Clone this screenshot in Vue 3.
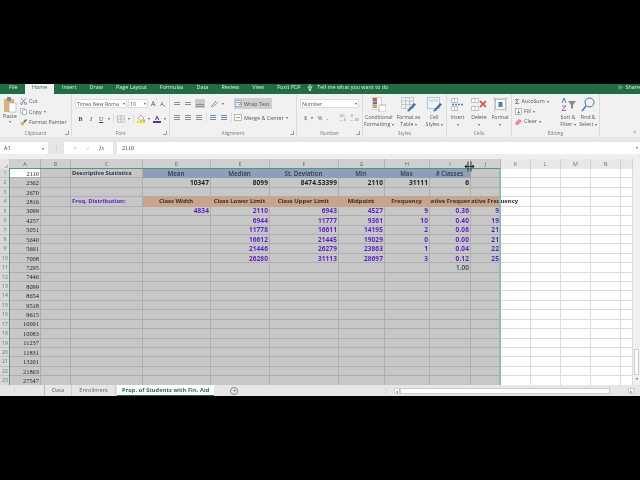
<script setup>
const tabs = ['File', 'Home', 'Insert', 'Draw', 'Page Layout', 'Formulas', 'Data', 'Review', 'View', 'Foxit PDF']
const letters = ['A', 'B', 'C', 'D', 'E', 'F', 'G', 'H', 'I', 'J', 'K', 'L', 'M', 'N', 'O']

const colA = [2110, 2362, 2670, 2816, 3099, 4257, 5051, 5640, 5661, 7008, 7295, 7446, 8099, 8654, 9518, 9615, 10001, 10083, 11237, 11831, 13201, 21863, 27547]

// row number -> cells from column C on
const data = {
  1: { C: 'Descriptive Statistics', D: 'Mean', E: 'Median', F: 'St. Deviation', G: 'Min', H: 'Max', I: '# Classes' },
  2: { D: '10347', E: '8099', F: '8474.53399', G: '2110', H: '31111', I: '6' },
  4: { C: 'Freq. Distribution:', D: 'Class Width', E: 'Class Lower Limit', F: 'Class Upper Limit', G: 'Midpoint', H: 'Frequency', I: 'Relative Frequency', J: 'Cumulative Frequency' },
  5: { D: '4834', E: '2110', F: '6943', G: '4527', H: '9', I: '0.36', J: '9' },
  6: { E: '6944', F: '11777', G: '9361', H: '10', I: '0.40', J: '19' },
  7: { E: '11778', F: '16611', G: '14195', H: '2', I: '0.08', J: '21' },
  8: { E: '16612', F: '21445', G: '19029', H: '0', I: '0.00', J: '21' },
  9: { E: '21446', F: '26279', G: '23863', H: '1', I: '0.04', J: '22' },
  10: { E: '26280', F: '31113', G: '28697', H: '3', I: '0.12', J: '25' },
  11: { I: '1.00' }
}

const selected = 'ABCDEFGHIJ'

const cellClass = (row, col) => {
  const list = []
  if (selected.includes(col)) list.push('sel')
  if (row === 1 && col === 'A') list.push('active')
  if (col === 'A') list.push('serif')
  if (row === 1 && 'DEFGHI'.includes(col)) list.push('blue')
  if (row === 4 && 'DEFGHIJ'.includes(col)) list.push('orange')
  if (col === 'C' && row === 1) list.push('title')
  if (col === 'C' && row === 4) list.push('freq')
  if (row === 2 && col !== 'A') list.push('plain')
  if (row >= 5 && row <= 10 && col !== 'A') list.push('purple')
  if (row === 11 && col === 'I') list.push('total')
  if (col === 'I') list.push('cellI')
  if (col === 'J') list.push('cellJ')
  return list
}

const cellText = (row, col) => {
  if (col === 'A') return colA[row - 1]
  return data[row] && data[row][col] ? data[row][col] : ''
}

const rows = colA.map((_, i) => i + 1)
</script>

<template>
  <div class="screen">
    <div class="excel">
      <div class="tabbar">
        <span v-for="t in tabs" :key="t" class="tab" :class="{ on: t === 'Home' }">{{ t }}</span>
        <span class="tell">
          <svg width="6" height="8" viewBox="0 0 6 8"><path d="M3 0v4M1 2l2 5 2-5" fill="none" stroke="#fff" stroke-width=".8"/></svg>
          Tell me what you want to do
        </span>
        <span class="share">
          <svg width="7" height="7" viewBox="0 0 7 7"><circle cx="2.5" cy="2" r="1.3" fill="none" stroke="#fff" stroke-width=".6"/><path d="M.5 6.5c0-3 4-3 4 0M5 3h2M6 2v2" fill="none" stroke="#fff" stroke-width=".6"/></svg>
          Share
        </span>
      </div>

      <div class="ribbon">
        <!-- Clipboard -->
        <div class="group g-clip">
          <div class="body row">
            <div class="paste">
              <svg width="14" height="16" viewBox="0 0 14 16"><rect x="1" y="2" width="10" height="13" fill="#d8b47a"/><rect x="4" y="0" width="4" height="4" fill="#8a8a8a"/><rect x="6" y="6" width="7" height="9" fill="#fff" stroke="#999" stroke-width=".5"/></svg>
              <span>Paste</span>
              <span class="caret">▾</span>
            </div>
            <div class="clip-list">
              <div class="mini">
                <svg width="7" height="7" viewBox="0 0 7 7"><path d="M1 0l4 5M6 0L2 5" stroke="#667" stroke-width=".7" fill="none"/><circle cx="1.5" cy="5.6" r="1" fill="none" stroke="#46a" stroke-width=".6"/><circle cx="5.5" cy="5.6" r="1" fill="none" stroke="#46a" stroke-width=".6"/></svg>
                Cut
              </div>
              <div class="mini">
                <svg width="7" height="7" viewBox="0 0 7 7"><rect x=".5" y=".5" width="4" height="4.5" fill="#fff" stroke="#889" stroke-width=".5"/><rect x="2.5" y="2" width="4" height="4.5" fill="#fff" stroke="#678" stroke-width=".5"/></svg>
                Copy <span class="caret">▾</span>
              </div>
              <div class="mini">
                <svg width="7" height="7" viewBox="0 0 7 7"><path d="M3 3l3-3 1 1-3 3z" fill="#5a5a5a"/><path d="M0 4l3-1 1 1-1 3z" fill="#e0a040"/></svg>
                Format Painter
              </div>
            </div>
          </div>
          <div class="label">Clipboard<i class="launch"></i></div>
        </div>

        <!-- Font -->
        <div class="group g-font">
          <div class="body col">
            <div class="line">
              <span class="combo w52">Times New Roma<span class="caret">▾</span></span>
              <span class="combo w20">10<span class="caret">▾</span></span>
              <span class="grow">A<sup>^</sup></span>
              <span class="grow small">A<sup>v</sup></span>
            </div>
            <div class="line icons">
              <b class="btn">B</b>
              <i class="btn">I</i>
              <u class="btn">U</u>
              <span class="caret">▾</span>
              <span class="sep"></span>
              <svg width="9" height="8" viewBox="0 0 9 8"><path d="M.5.5h8v7h-8zM4.5.5v7M.5 4h8" fill="none" stroke="#9a9a9a" stroke-width=".6"/></svg>
              <span class="caret">▾</span>
              <span class="sep"></span>
              <span class="paint">
                <svg width="8" height="6" viewBox="0 0 8 6"><path d="M4 0l3 3-3 3-3-3z" fill="#eee" stroke="#777" stroke-width=".5"/><path d="M7 4l1 2H6z" fill="#777"/></svg>
                <i class="swatch yellow"></i>
              </span>
              <span class="caret">▾</span>
              <span class="paint">
                <b class="letter">A</b>
                <i class="swatch violet"></i>
              </span>
              <span class="caret">▾</span>
            </div>
          </div>
          <div class="label">Font<i class="launch"></i></div>
        </div>

        <!-- Alignment -->
        <div class="group g-align">
          <div class="body col">
            <div class="line align-line">
              <span class="lines"><i></i><i></i></span>
              <span class="lines"><i></i><i></i></span>
              <span class="lines pressed"><i></i><i></i></span>
              <svg class="orient" width="10" height="8" viewBox="0 0 10 8"><path d="M1 7l5-6" stroke="#666" stroke-width=".8"/><path d="M3 7l5-5" stroke="#a36ac0" stroke-width=".8"/></svg>
              <span class="caret">▾</span>
              <span class="wrap">
                <svg width="7" height="7" viewBox="0 0 7 7"><path d="M.5.5h6v6h-6z" fill="#e8eef5" stroke="#7a8a9a" stroke-width=".5"/><path d="M1.5 2.5h4v2h-2" fill="none" stroke="#3a70b0" stroke-width=".6"/></svg>
                Wrap Text
              </span>
            </div>
            <div class="line align-line">
              <span class="lines"><i></i><i></i><i></i></span>
              <span class="lines"><i></i><i></i><i></i></span>
              <span class="lines"><i></i><i></i><i></i></span>
              <span class="sep"></span>
              <span class="lines blue-l"><i></i><i></i><i></i></span>
              <span class="lines blue-l"><i></i><i></i><i></i></span>
              <span class="sep"></span>
              <span class="merge">
                <svg width="8" height="7" viewBox="0 0 8 7"><rect x=".5" y=".5" width="7" height="6" fill="#fff" stroke="#777" stroke-width=".5"/><path d="M2 3.5h4" stroke="#555" stroke-width=".6"/></svg>
                Merge &amp; Center <span class="caret">▾</span>
              </span>
            </div>
          </div>
          <div class="label">Alignment<i class="launch"></i></div>
        </div>

        <!-- Number -->
        <div class="group g-num">
          <div class="body col">
            <div class="line"><span class="combo w70">Number<span class="caret">▾</span></span></div>
            <div class="line num-line">
              <span>$</span><span class="caret">▾</span><span>%</span><span class="comma">,</span>
              <span class="dec">.00<br>→.0</span><span class="dec">.0<br>←.00</span>
            </div>
          </div>
          <div class="label">Number<i class="launch"></i></div>
        </div>

        <!-- Styles -->
        <div class="group g-styles">
          <div class="body row spread">
            <div class="big w28">
              <svg width="14" height="15" viewBox="0 0 14 15"><rect x=".5" y=".5" width="9" height="12" fill="#fff" stroke="#aaa" stroke-width=".5"/><rect x="1" y="1" width="4" height="3" fill="#d9534f"/><rect x="1" y="4.500" width="4" height="3" fill="#4a7fc0"/><rect x="1" y="8" width="4" height="3" fill="#e6a04a"/><rect x="7" y="8" width="7" height="7" fill="#fff" stroke="#777" stroke-width=".5"/></svg>
              <span>Conditional<br>Formatting <em class="caret">▾</em></span>
            </div>
            <div class="big w24">
              <svg width="15" height="15" viewBox="0 0 15 15"><path d="M.5.5h12v11H.5zM.5 4h12M.5 7.500h12M4.500.5v11M8.500.5v11" fill="#eef1f4" stroke="#9aa" stroke-width=".5"/><path d="M6 14l7-8 2 1.500-7 7z" fill="#3a70b0"/></svg>
              <span>Format as<br>Table <em class="caret">▾</em></span>
            </div>
            <div class="big w20">
              <svg width="15" height="15" viewBox="0 0 15 15"><rect x=".5" y=".5" width="12" height="11" fill="#eef3f8" stroke="#8a9aaa" stroke-width=".5"/><rect x="2" y="2" width="9" height="3" fill="#cfe0f0"/><path d="M6 14l7-8 2 1.500-7 7z" fill="#3a70b0"/></svg>
              <span>Cell<br>Styles <em class="caret">▾</em></span>
            </div>
          </div>
          <div class="label">Styles</div>
        </div>

        <!-- Cells -->
        <div class="group g-cells">
          <div class="body row spread">
            <div class="big w20">
              <svg width="14" height="15" viewBox="0 0 14 15"><path d="M.5 1.500h6v4h-6zM.5 9.500h6v4h-6zM3.500 1.500v4M3.500 9.500v4" fill="#fff" stroke="#8a8a8a" stroke-width=".5"/><path d="M1 7.500h12" stroke="#4a7fc0" stroke-width="1.500" stroke-dasharray="2 1"/></svg>
              <span>Insert<br><em class="caret">▾</em></span>
            </div>
            <div class="big w20">
              <svg width="16" height="15" viewBox="0 0 16 15"><path d="M.5 1.500h7v4h-7zM.5 9.500h7v4h-7zM4 1.500v4M4 9.500v4" fill="#fff" stroke="#8a8a8a" stroke-width=".5"/><path d="M9 4l6 6M15 4l-6 6" stroke="#d9402e" stroke-width="1.500"/></svg>
              <span>Delete<br><em class="caret">▾</em></span>
            </div>
            <div class="big w20">
              <svg width="15" height="15" viewBox="0 0 15 15"><rect x="2.500" y="2.500" width="10" height="10" fill="#fff" stroke="#8a8a8a" stroke-width=".5"/><rect x="5.500" y="5" width="4" height="5" fill="#4a7fc0"/><path d="M0 1.500h15M1.500 0v15M13 0v15" stroke="#999" stroke-width=".4"/></svg>
              <span>Format<br><em class="caret">▾</em></span>
            </div>
          </div>
          <div class="label">Cells</div>
        </div>

        <!-- Editing -->
        <div class="group g-edit">
          <div class="body row">
            <div class="edit-list">
              <div class="mini"><span class="sigma">Σ</span> AutoSum <span class="caret">▾</span></div>
              <div class="mini">
                <svg width="7" height="7" viewBox="0 0 7 7"><rect x=".5" y=".5" width="6" height="6" fill="#fff" stroke="#777" stroke-width=".5"/><path d="M3.500 1.500v4M2 4l1.500 1.500L5 4" fill="none" stroke="#3a70b0" stroke-width=".7"/></svg>
                Fill <span class="caret">▾</span>
              </div>
              <div class="mini">
                <svg width="7" height="7" viewBox="0 0 7 7"><path d="M0 5l4-4 3 2-4 4H1z" fill="#e88aa0"/></svg>
                Clear <span class="caret">▾</span>
              </div>
            </div>
            <div class="big w20 sort">
              <svg width="15" height="15" viewBox="0 0 15 15"><path d="M7 4h8l-3 4v4l-2-1V8z" fill="#8a8a8a"/><path d="M1 6l2-5 2 5" fill="none" stroke="#3a70b0" stroke-width=".9"/><path d="M1 9h4l-4 4.500h4" fill="none" stroke="#b050a0" stroke-width=".9"/></svg>
              <span>Sort &amp;<br>Filter <em class="caret">▾</em></span>
            </div>
            <div class="big w20">
              <svg width="14" height="15" viewBox="0 0 14 15"><circle cx="8.500" cy="5.500" r="4.500" fill="none" stroke="#3a70b0" stroke-width="1"/><path d="M5 9l-4 5" stroke="#3a70b0" stroke-width="1.300"/></svg>
              <span>Find &amp;<br>Select <em class="caret">▾</em></span>
            </div>
          </div>
          <div class="label">Editing</div>
        </div>

        <div class="collapse">^</div>
      </div>

      <div class="strip"></div>

      <div class="formula">
        <div class="namebox">A1<span class="caret">▾</span></div>
        <div class="dots">⋮</div>
        <div class="fbtns">
          <span>✕</span><span>✓</span><span class="fx">fx</span>
        </div>
        <div class="finput">2110<span class="caret">▾</span></div>
      </div>

      <div class="strip2"></div>

      <div class="sheet">
        <div class="gridwrap">
          <div class="grid">
            <div class="corner"><i></i></div>
            <div v-for="(l, i) in letters" :key="'h' + i" class="colhead" :class="{ selh: i < 10 }">{{ l === 'O' ? '' : l }}</div>
            <template v-for="r in rows" :key="r">
              <div class="rowhead">{{ r }}</div>
              <div
                v-for="(l, i) in letters"
                :key="r + '-' + i"
                class="cell"
                :class="cellClass(r, l)"
              ><span>{{ cellText(r, l) }}</span></div>
            </template>
          </div>
          <div class="selbox"></div>
          <svg class="cursor" width="11" height="11" viewBox="0 0 11 11">
            <path d="M1 5.500h9M4 .5v10M7 .5v10" stroke="#111" stroke-width=".8" fill="none"/>
            <path d="M.5 5.500l2-2v4zM10.500 5.500l-2-2v4z" fill="#111"/>
          </svg>
        </div>
        <div class="vscroll">
          <span class="thumb"></span>
          <span class="arrow">▾</span>
        </div>
      </div>

      <div class="bottom">
        <div class="nav"><span>‹</span><span>›</span></div>
        <div class="stab">Data</div>
        <div class="stab">Enrollment</div>
        <div class="stab current">Prop. of Students with Fin. Aid</div>
        <div class="plus">+</div>
        <div class="hscroll">
          <span class="hdots">⋮</span>
          <span class="harrow">◂</span>
          <span class="hthumb"></span>
          <span class="harrow end">▸</span>
        </div>
      </div>
    </div>
  </div>
</template>

<style>
html, body { margin: 0; background: #000; }
</style>

<style scoped>
.screen {
  width: 640px;
  height: 480px;
  background: #000;
  padding: 84px 0;
  box-sizing: border-box;
  overflow: hidden;
  font-family: "Open Sans", "Liberation Sans", sans-serif;
  color: #444;
}
.excel {
  width: 640px;
  height: 312px;
  background: #e9e9e9;
  display: flex;
  flex-direction: column;
  filter: blur(0.35px);
}

.tabbar {
  height: 10px;
  background: #1f6e43;
  display: flex;
  color: #e4efe8;
  font-size: 5.4px;
  flex: none;
  padding-left: 7px;
  overflow: hidden;
}
.tab { padding: 0 6.6px; line-height: 7px; height: 10px; }
.tab:first-child { padding: 0 7.500px 0 2px; }
.tab.on { background: #f1f1f1; color: #2a6e48; padding: 0 7px; margin-right: 1px; }
.tell { margin-left: 0; display: flex; align-items: flex-start; gap: 4px; line-height: 7px; }
.tell svg { display: block; }
.share { margin-left: auto; display: flex; align-items: flex-start; gap: 3px; line-height: 7px; white-space: nowrap; width: 22px; flex: none; box-sizing: border-box; }

.ribbon {
  height: 43px;
  flex: none;
  background: #f1f1f1;
  display: flex;
  font-size: 5.4px;
  color: #555;
}
.group {
  display: flex;
  flex-direction: column;
  border-right: 1px solid #dcdcdc;
  box-sizing: border-box;
  flex: none;
}
.g-clip { width: 72px; }
.g-font { width: 98px; }
.g-align { width: 127px; }
.g-num { width: 66px; }
.g-styles { width: 84px; }
.g-cells { width: 65px; }
.g-edit { width: 88px; }
.body { flex: 1; min-height: 0; }
.row { display: flex; }
.col { display: flex; flex-direction: column; gap: 3px; padding: 4px 3px 0 3px; }
.spread { justify-content: space-around; padding-top: 3px; }
.label {
  height: 8px;
  line-height: 8px;
  text-align: center;
  font-size: 4.800px;
  color: #777;
  position: relative;
}
.launch {
  position: absolute;
  right: 2px;
  bottom: 2px;
  width: 3px;
  height: 3px;
  border-right: 1px solid #999;
  border-bottom: 1px solid #999;
}
.caret { font-size: 3.5px; color: #666; font-style: normal; }

.paste {
  width: 20px;
  display: flex;
  flex-direction: column;
  align-items: center;
  padding-top: 3px;
  line-height: 6px;
  flex: none;
}
.clip-list { display: flex; flex-direction: column; gap: 2.500px; padding-top: 3px; }
.mini { display: flex; align-items: center; gap: 2px; height: 8px; white-space: nowrap; }
.mini svg { flex: none; }

.line { display: flex; align-items: center; gap: 1px; height: 11px; }
.combo {
  height: 9px;
  background: #fff;
  border: 1px solid #dcdcdc;
  box-sizing: border-box;
  display: flex;
  align-items: center;
  justify-content: space-between;
  padding: 0 1px;
  font-size: 5.200px;
  white-space: nowrap;
  overflow: hidden;
}
.w52 { width: 52px; }
.w20 { width: 20px; }
.w70 { width: 62px; }
.grow { font-size: 7px; margin-left: 2px; color: #555; display: flex; }
.grow.small { font-size: 5.500px; align-items: flex-end; }
.grow sup { font-size: 3px; line-height: 3px; color: #3a70b0; }
.icons { gap: 3px; padding-left: 2px; margin-top: 1px; }
.btn { font-size: 6px; width: 8px; text-align: center; color: #444; font-family: "Liberation Serif", serif; }
.sep { width: 1px; height: 9px; background: #ddd; }
.paint { display: flex; flex-direction: column; align-items: center; width: 9px; gap: 0; }
.swatch { display: block; width: 8px; height: 2px; }
.yellow { background: #f2e600; }
.violet { background: #6a1fd0; }
.letter { font-size: 6px; line-height: 6px; color: #444; }

.align-line { gap: 2px; }
.lines { width: 8px; height: 9px; display: flex; flex-direction: column; justify-content: center; gap: 1px; flex: none; padding: 0 1px; box-sizing: border-box; margin-right: 1px; }
.lines i { display: block; height: 1px; background: #8f8f8f; }
.lines.pressed { background: #c9c9c9; width: 10px; justify-content: flex-end; padding-bottom: 1px; }
.blue-l i { background: #6c8db5; }
.orient { margin-left: 2px; }
.wrap {
  margin-left: 8px;
  width: 38px;
  height: 11px;
  background: #cfcfcf;
  display: flex;
  align-items: center;
  gap: 2px;
  padding: 0 1px;
  box-sizing: border-box;
  white-space: nowrap;
}
.merge { display: flex; align-items: center; gap: 2px; white-space: nowrap; }

.num-line { gap: 4px; padding-left: 4px; color: #666; font-size: 6px; }
.comma { margin-right: 7px; }
.dec { font-size: 3.800px; line-height: 4px; color: #777; }

.big {
  display: flex;
  flex-direction: column;
  align-items: center;
  text-align: center;
  line-height: 7px;
  gap: 2px;
  flex: none;
  font-size: 5.100px;
  white-space: nowrap;
}
.w28 { width: 28px; }
.w24 { width: 24px; }
.edit-list { padding: 3px 0 0 3px; display: flex; flex-direction: column; gap: 2px; width: 43px; flex: none; }
.big.sort { padding-top: 3px; }
.big.sort + .big { padding-top: 3px; }
.sigma { font-size: 8px; line-height: 8px; color: #444; }
.collapse { margin-left: auto; align-self: flex-end; padding: 0 4px 2px; font-size: 5px; }

.strip { height: 5px; flex: none; background: #e6e6e6; }
.formula {
  height: 12px;
  flex: none;
  display: flex;
  background: #e6e6e6;
  font-size: 5.400px;
}
.namebox {
  width: 48px;
  background: #fff;
  display: flex;
  align-items: center;
  justify-content: space-between;
  padding: 0 4px;
  box-sizing: border-box;
}
.dots { width: 16px; text-align: center; line-height: 12px; color: #aaa; }
.fbtns {
  width: 49px;
  background: #fff;
  display: flex;
  align-items: center;
  justify-content: space-around;
  padding: 0 4px;
  box-sizing: border-box;
  color: #bdbdbd;
}
.fx { color: #666; font-style: italic; font-family: "Liberation Serif", serif; font-size: 7px; }
.finput {
  flex: 1;
  margin-left: 4px;
  background: #fff;
  line-height: 12px;
  padding-left: 5px;
  color: #444;
  font-family: "Liberation Serif", serif;
  font-size: 6.200px;
  display: flex;
  justify-content: space-between;
  padding-right: 2px;
}
.strip2 { height: 5px; flex: none; background: #eee; }

.sheet { height: 226px; flex: none; display: flex; overflow: hidden; background: #fff; }
.gridwrap { width: 633px; position: relative; overflow: hidden; flex: none; }
.grid {
  display: grid;
  grid-template-columns: 10px 31px 30px 72px 68px 59px 69px 46px 45px 41px 30px 30px 30px 30px 30px 12px;
  grid-template-rows: 10px;
  grid-auto-rows: 9.430px;
  font-size: 6.200px;
}
.corner { background: #e6e6e6; border-right: 1px solid #ccc; box-sizing: border-box; position: relative; }
.corner i {
  position: absolute;
  right: 1px;
  bottom: 1px;
  border-left: 4px solid transparent;
  border-bottom: 4px solid #bbb;
}
.colhead {
  background: #e8e8e8;
  border-right: 1px solid #cfcfcf;
  box-sizing: border-box;
  text-align: center;
  line-height: 10px;
  color: #666;
  font-size: 5.400px;
}
.colhead.selh { background: #d0d0d0; border-right-color: #b4b4b4; color: #5a6a60; }
.rowhead {
  background: #d8d8d8;
  box-sizing: border-box;
  border-bottom: 1px solid #c0c0c0;
  text-align: center;
  color: #6a7a70;
  font-size: 5.200px;
  line-height: 9px;
}
.cell {
  border-right: 1px solid #dcdcdc;
  border-bottom: 1px solid #dcdcdc;
  box-sizing: border-box;
  display: flex;
  align-items: center;
  justify-content: flex-end;
  padding-right: 1px;
  white-space: nowrap;
  min-width: 0;
  background: #fff;
}
.cell.sel { background: #c7c7c7; border-color: #aeaeae; }
.cell.active { background: #fff; }
.serif {
  font-family: "Liberation Serif", serif;
  color: #222;
  font-size: 6.400px;
  padding-right: 1px;
}
.blue { background: #8d9fbd !important; color: #2b3a4c; justify-content: center; font-weight: 600; border-color: #8d9fbd !important; }
.orange { background: #c8a58a !important; color: #3c2c22; justify-content: center; font-weight: 700; border-color: #c8a58a !important; font-size: 5.900px; }
.title { justify-content: flex-start; color: #2a3550; font-weight: 700; padding-left: 1px; font-size: 5.700px; }
.freq { justify-content: flex-start; color: #5a1fc8; font-weight: 700; padding-left: 1px; font-size: 5.900px; }
.plain { color: #222; font-weight: 700; font-size: 6.500px; letter-spacing: .1px; }
.purple { color: #5a1fc8; font-weight: 700; font-size: 6.500px; letter-spacing: .1px; }
.total { color: #444; font-weight: 600; font-size: 6.500px; }
.cellI { overflow: hidden; position: relative; z-index: 2; }
.cellJ { position: relative; z-index: 1; }

.selbox {
  position: absolute;
  left: 9px;
  top: 9px;
  width: 492px;
  height: 240px;
  z-index: 3;
  border: 1px solid #4f9a76;
  border-right-width: 2px;
  border-right-color: #8cbfa8;
  box-sizing: border-box;
  pointer-events: none;
}
.cursor { position: absolute; left: 464px; top: 2px; z-index: 4; }

.vscroll {
  width: 7px;
  flex: none;
  background: #f0f0f0;
  display: flex;
  flex-direction: column;
  align-items: center;
  justify-content: flex-end;
  font-size: 4px;
  color: #555;
}
.thumb { width: 5px; height: 26px; background: #fff; border: 1px solid #ccc; box-sizing: border-box; margin-bottom: 1px; }
.arrow { line-height: 6px; margin-bottom: 3px; }

.bottom {
  height: 11px;
  flex: 1;
  display: flex;
  align-items: stretch;
  background: #e6e6e6;
  font-size: 5.600px;
  color: #666;
}
.nav { width: 45px; display: flex; justify-content: center; gap: 10px; border-right: 1px solid #bbb; box-sizing: border-box; line-height: 11px; color: #bbb; padding-right: 3px; }
.stab { padding: 0 7px; line-height: 11px; border-right: 1px solid #ccc; }
.stab.current {
  background: #fff;
  color: #1f6e43;
  font-weight: 700;
  padding: 0 5px;
  border-bottom: 1px solid #1f6e43;
  border-right: none;
  margin-left: 1px;
  letter-spacing: .1px;
}
.plus {
  margin-left: 16px;
  width: 8px;
  height: 8px;
  border: 1px solid #888;
  border-radius: 50%;
  align-self: center;
  box-sizing: border-box;
  text-align: center;
  line-height: 6px;
  font-size: 6px;
}
.hscroll { flex: 1; display: flex; align-items: center; justify-content: flex-end; padding-right: 6px; }
.hdots { margin-right: 5px; color: #aaa; line-height: 11px; }
.hthumb { width: 210px; height: 6px; background: #fff; border: 1px solid #ccc; box-sizing: border-box; margin-right: 18px; }
.harrow { font-size: 4px; background: #fff; border: 1px solid #ccc; width: 6px; height: 6px; line-height: 5px; text-align: center; box-sizing: border-box; }
</style>
